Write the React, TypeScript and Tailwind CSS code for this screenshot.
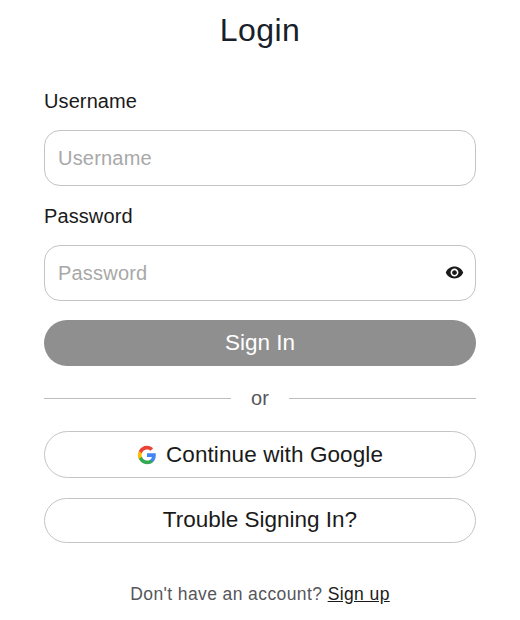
import React from "react";

export default function App() {
  return (
    <div className="w-[520px] h-[620px] bg-white px-[44px] font-['Liberation_Sans',sans-serif] text-[#1a1a1a]">
      <h1 className="text-center text-[32px] leading-[36px] pt-[12px] font-normal text-[#18202a] tracking-[0.4px]">Login</h1>
      <label className="block mt-[39px] text-[20px] leading-[28px] tracking-[0.1px]">Username</label>
      <div className="mt-[15px] h-[56px] rounded-[16px] border border-[#c4c4c4] flex items-center px-[13px] pb-[1px]">
        <span className="text-[20px] tracking-[0.2px] text-[#a8a8a8]">Username</span>
      </div>
      <label className="block mt-[16px] text-[20px] leading-[28px] tracking-[0.1px]">Password</label>
      <div className="mt-[15px] h-[56px] rounded-[16px] border border-[#c4c4c4] flex items-center justify-between pl-[13px] pr-[11px] pb-[1px]">
        <span className="text-[20px] tracking-[0.2px] text-[#a8a8a8]">Password</span>
        <svg width="19" height="19" viewBox="0 0 24 24" fill="#1a1a1a"><path d="M12 4.5C7 4.5 2.73 7.61 1 12c1.73 4.39 6 7.5 11 7.5s9.27-3.11 11-7.5c-1.73-4.39-6-7.5-11-7.5zM12 17c-2.76 0-5-2.24-5-5s2.24-5 5-5 5 2.24 5 5-2.24 5-5 5zm0-8c-1.66 0-3 1.34-3 3s1.34 3 3 3 3-1.34 3-3-1.34-3-3-3z"/></svg>
      </div>
      <div className="mt-[19px] h-[46px] rounded-full bg-[#8f8f8f] flex items-center justify-center text-white text-[22.5px]">Sign In</div>
      <div className="mt-[20px] h-[24px] flex items-center gap-[20px] text-[20px] leading-[24px] text-[#55565a]">
        <div className="flex-1 h-px bg-[#bdbdbd]" />
        <span>or</span>
        <div className="flex-1 h-px bg-[#bdbdbd]" />
      </div>
      <div className="mt-[21px] h-[47px] rounded-full border border-[#c4c4c4] flex items-center justify-center gap-[9px] text-[22.5px] tracking-[0.1px]">
        <svg width="20" height="20" viewBox="0 0 24 24"><path fill="#4285F4" d="M22.56 12.25c0-.78-.07-1.53-.2-2.25H12v4.26h5.92c-.26 1.37-1.04 2.53-2.21 3.31v2.77h3.57c2.08-1.92 3.28-4.74 3.28-8.09z"/><path fill="#34A853" d="M12 23c2.97 0 5.46-.98 7.28-2.66l-3.57-2.77c-.98.66-2.23 1.06-3.71 1.06-2.86 0-5.29-1.93-6.16-4.53H2.18v2.84C3.99 20.53 7.7 23 12 23z"/><path fill="#FBBC05" d="M5.84 14.09c-.22-.66-.35-1.36-.35-2.09s.13-1.43.35-2.09V7.07H2.18C1.43 8.55 1 10.22 1 12s.43 3.45 1.18 4.93l3.66-2.84z"/><path fill="#EA4335" d="M12 5.38c1.62 0 3.06.56 4.21 1.64l3.15-3.15C17.45 2.09 14.97 1 12 1 7.7 1 3.99 3.47 2.18 7.07l3.66 2.84c.87-2.6 3.3-4.53 6.16-4.53z"/></svg>
        <span>Continue with Google</span>
      </div>
      <div className="mt-[20px] h-[45px] rounded-full border border-[#c4c4c4] flex items-center justify-center pb-[1px] text-[22.5px]">Trouble Signing In?</div>
      <p className="mt-[38px] text-center text-[17.5px] leading-[26px] tracking-[0.4px] text-[#55565a]">Don't have an account? <span className="underline text-[#1a1a1a]">Sign up</span></p>
    </div>
  );
}
